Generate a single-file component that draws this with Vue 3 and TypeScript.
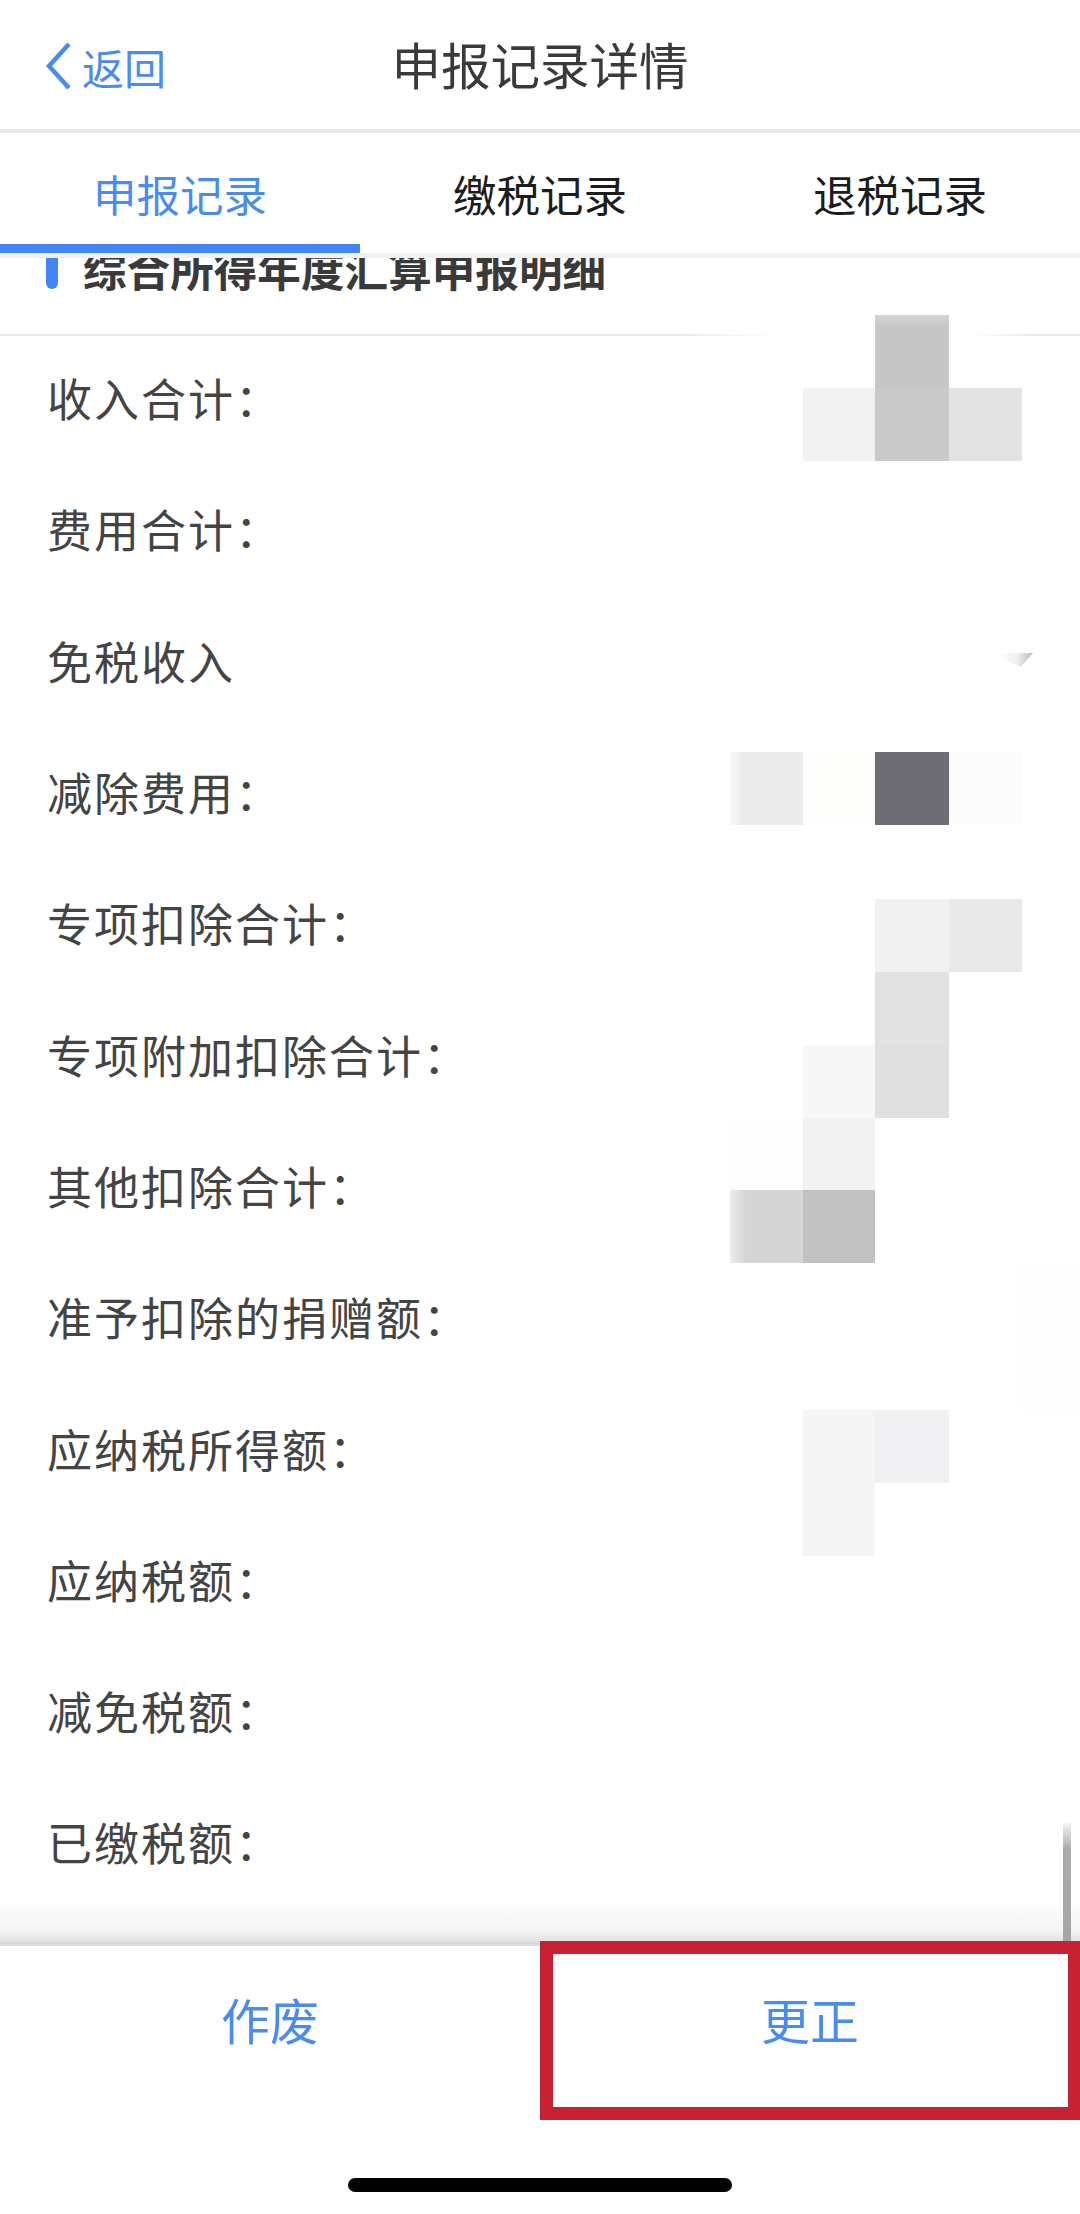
<script setup lang="ts">
interface Block {
  x: number
  y: number
  w: number
  h: number
  c: string
}

const tabs = ['申报记录', '缴税记录', '退税记录']
const rows = [
  '收入合计：',
  '费用合计：',
  '免税收入',
  '减除费用：',
  '专项扣除合计：',
  '专项附加扣除合计：',
  '其他扣除合计：',
  '准予扣除的捐赠额：',
  '应纳税所得额：',
  '应纳税额：',
  '减免税额：',
  '已缴税额：',
]

const blocks: Block[] = [
  { x: 875, y: 315, w: 74, h: 73, c: 'linear-gradient(to bottom, #d6d6d6, #c6c6c6 16%)' },
  { x: 803, y: 388, w: 72, h: 73, c: '#f2f2f2' },
  { x: 875, y: 388, w: 74, h: 73, c: '#cacaca' },
  { x: 949, y: 388, w: 73, h: 73, c: '#e3e3e3' },
  { x: 730, y: 752, w: 73, h: 73, c: 'linear-gradient(to right, #fafafa, #ebebeb 18%)' },
  { x: 803, y: 752, w: 72, h: 73, c: '#fdfdfb' },
  { x: 875, y: 752, w: 74, h: 73, c: '#6e6d75' },
  { x: 949, y: 752, w: 73, h: 73, c: '#fcfcfc' },
  { x: 875, y: 899, w: 74, h: 73, c: '#f1f1f1' },
  { x: 949, y: 899, w: 73, h: 73, c: '#e9e9e9' },
  { x: 875, y: 972, w: 74, h: 73, c: '#e2e2e2' },
  { x: 803, y: 1045, w: 72, h: 73, c: '#f7f7f7' },
  { x: 875, y: 1045, w: 74, h: 73, c: '#e0e0e0' },
  { x: 730, y: 1118, w: 73, h: 72, c: '#fefefe' },
  { x: 803, y: 1118, w: 72, h: 72, c: '#f2f2f2' },
  { x: 730, y: 1190, w: 73, h: 73, c: 'linear-gradient(to right, #ececec, #d5d5d5 22%)' },
  { x: 803, y: 1190, w: 72, h: 73, c: '#c1c1c1' },
  { x: 1022, y: 1263, w: 58, h: 147, c: '#fdfdfd' },
  { x: 803, y: 1410, w: 72, h: 73, c: '#f5f5f5' },
  { x: 875, y: 1410, w: 74, h: 73, c: '#f0f0f2' },
  { x: 803, y: 1483, w: 72, h: 73, c: '#f4f4f4' },
]

function blockStyle(b: Block) {
  return {
    left: `${b.x}px`,
    top: `${b.y}px`,
    width: `${b.w}px`,
    height: `${b.h}px`,
    background: b.c,
  }
}
</script>

<template>
  <div class="page">
    <header class="nav">
      <div class="back">
        <svg class="chevron" viewBox="0 0 28 48" width="28" height="48">
          <path d="M24 2 L4 24 L24 46" fill="none" stroke="#4a8bf0" stroke-width="4.5" />
        </svg>
        <span>返回</span>
      </div>
      <h1 class="title">申报记录详情</h1>
    </header>

    <nav class="tabs">
      <div v-for="(t, i) in tabs" :key="t" class="tab" :class="{ active: i === 0 }">{{ t }}</div>
    </nav>

    <main class="scroll">
      <div class="section">
        <span class="mark"></span>
        <span class="section-title">综合所得年度汇算申报明细</span>
      </div>
      <div v-for="r in rows" :key="r" class="row">{{ r }}</div>
      <div class="shade"></div>
      <div class="scrollbar"></div>
    </main>

    <footer class="footer">
      <div class="actions">
        <button class="action">作废</button>
        <button class="action">更正</button>
      </div>
      <div class="home-area"><span class="home"></span></div>
    </footer>

    <div v-for="(b, i) in blocks" :key="i" class="mosaic" :style="blockStyle(b)"></div>
    <div class="smudge"></div>
    <div class="highlight"></div>
  </div>
</template>

<style>
html,
body {
  margin: 0;
  background: #fff;
}
</style>

<style scoped>
.page {
  position: relative;
  display: flex;
  flex-direction: column;
  width: 1080px;
  height: 2214px;
  overflow: hidden;
  background: #fff;
  font-family: "Noto Sans CJK SC", "Noto Sans", sans-serif;
  color: #444;
}

.nav {
  position: relative;
  display: flex;
  flex: none;
  align-items: center;
  justify-content: center;
  height: 129px;
  border-bottom: 4px solid #e8e8e8;
}

.back {
  position: absolute;
  left: 45px;
  top: 42px;
  display: flex;
  align-items: center;
  gap: 9px;
  height: 48px;
  color: #4a8bf0;
  font-size: 42px;
}

.title {
  position: relative;
  top: -1px;
  margin: 0;
  font-size: 49.5px;
  font-weight: 400;
  color: #3a3a3a;
}

.tabs {
  display: grid;
  flex: none;
  grid-template-columns: repeat(3, 360px);
  height: 120px;
  border-bottom: 5px solid #f0f0f0;
}

.tab {
  display: flex;
  align-items: center;
  justify-content: center;
  box-sizing: border-box;
  font-size: 43.5px;
  color: #1c1c1c;
}

.tab.active {
  color: #4a8bf0;
  border-bottom: 9px solid #4285f4;
  padding-top: 9px;
}

.scroll {
  position: relative;
  flex: 1;
  min-height: 0;
  overflow: hidden;
}

.section {
  display: flex;
  align-items: center;
  box-sizing: border-box;
  height: 108px;
  margin-top: -30px;
  padding-left: 46px;
  padding-bottom: 26px;
  border-bottom: 2px solid;
  border-image: linear-gradient(to right, #e8e8e8 0, #e8e8e8 62%, #fff 72%, #fff 90%, #e8e8e8 96%) 1;
  gap: 25px;
}

.mark {
  flex: none;
  width: 12px;
  height: 44px;
  border-radius: 6px;
  background: #4285f4;
  transform: translateY(-1px);
}

.section-title {
  font-size: 43.6px;
  font-weight: 700;
  color: #3a3a3a;
}

.row {
  display: flex;
  align-items: center;
  box-sizing: border-box;
  height: 131.3px;
  padding-left: 47px;
  padding-bottom: 8px;
  font-size: 45px;
  letter-spacing: 2px;
  color: #444;
}

.shade {
  position: absolute;
  left: 0;
  right: 0;
  bottom: 0;
  height: 36px;
  background: linear-gradient(to bottom, #fbfbfb 0%, #f4f4f6 60%, #e4e4e6 90%, #d4d4d6 100%);
}

.scrollbar {
  position: absolute;
  right: 9px;
  bottom: 0;
  width: 8px;
  height: 121px;
  background: linear-gradient(to bottom, #f4f4f4, #aaaaaa 22%, #a6a6a6);
}

.footer {
  flex: none;
  height: 270px;
  border-top: 2px solid #dcdcdc;
  box-sizing: border-box;
}

.actions {
  display: grid;
  grid-template-columns: 1fr 1fr;
  height: 145px;
}

.action {
  padding: 0;
  border: none;
  background: none;
  font-family: inherit;
  font-size: 49px;
  color: #4a8bf0;
}

.home-area {
  display: flex;
  justify-content: center;
  padding-top: 87px;
}

.home {
  width: 384px;
  height: 14px;
  border-radius: 7px;
  background: #000;
}

.mosaic {
  position: absolute;
}

.smudge {
  position: absolute;
  left: 997px;
  top: 653px;
  width: 36px;
  height: 14px;
  clip-path: polygon(0 0, 100% 0, 66% 100%, 30% 60%);
  background: linear-gradient(to right, #fff, #f0f0f0 55%, #bcbcbc);
}

.highlight {
  position: absolute;
  left: 540px;
  top: 1941px;
  width: 540px;
  height: 179px;
  box-sizing: border-box;
  border: 13px solid #c82033;
  border-right-width: 12px;
}
</style>
